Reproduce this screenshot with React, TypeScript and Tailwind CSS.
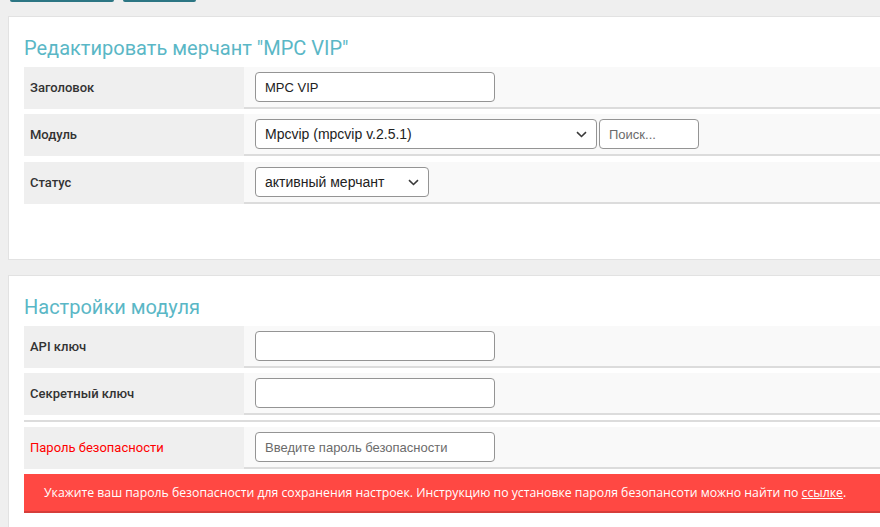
import React from "react";

const label = "w-[220px] shrink-0 bg-[#efefef] h-[42px] flex items-center pl-[6px] text-[13px] font-medium text-[#333]";
const cell = "flex-1 bg-[#f9f9f9] h-[42px] border-b-2 border-[#dcdcdc] flex items-center pl-[11px] gap-[2px]";
const input =
  "h-[30px] w-[240px] rounded-[4px] border border-[#949494] bg-white px-[9px] text-[13px] text-[#222] outline-none placeholder:text-[#6b6b6b] font-['Liberation_Sans',Arial,sans-serif]";

function Chevron() {
  return (
    <svg width="11" height="7" viewBox="0 0 11 7" className="shrink-0">
      <path d="M1 1.2 L5.5 5.5 L10 1.2" fill="none" stroke="#3a3a3a" strokeWidth="1.6" />
    </svg>
  );
}

function Select({ value, width }: { value: string; width: string }) {
  return (
    <div
      className={`h-[30px] ${width} rounded-[4px] border border-[#949494] bg-white pl-[9px] pr-[9px] flex items-center justify-between text-[14px] text-[#222] font-['Liberation_Sans',Arial,sans-serif]`}
    >
      <span>{value}</span>
      <Chevron />
    </div>
  );
}

function Row({ title, children, red }: { title: string; children: React.ReactNode; red?: boolean }) {
  return (
    <div className="flex">
      <div className={red ? label + " !font-normal !text-[#ff0000]" : label}>{title}</div>
      <div className={cell}>{children}</div>
    </div>
  );
}

export default function App() {
  return (
    <div className="w-[880px] h-[527px] overflow-hidden bg-[#efefef] font-['Roboto',sans-serif]">
      <div className="flex h-[2px]">
        <div className="ml-[10px] w-[104px] bg-[#2c7684] rounded-b-[2px]" />
        <div className="ml-[9px] w-[73px] bg-[#2c7684] rounded-b-[2px]" />
      </div>

      <div className="mt-[14px] ml-[8px] mr-[-30px] bg-white border border-[#e2e2e2] pl-[15px] pt-[20px] pb-[55px]">
        <h2 className="text-[20px] leading-[22px] text-[#5ab7c6] mb-[8px]">Редактировать мерчант "MPC VIP"</h2>
        <div className="flex flex-col">
          <Row title="Заголовок">
            <input className={input} readOnly value="MPC VIP" />
          </Row>
          <div className="mt-[5px]">
            <Row title="Модуль">
              <Select value="Mpcvip (mpcvip v.2.5.1)" width="w-[342px]" />
              <input className={input + " !w-[100px]"} readOnly placeholder="Поиск..." />
            </Row>
          </div>
          <div className="mt-[6px]">
            <Row title="Статус">
              <Select value="активный мерчант" width="w-[174px]" />
            </Row>
          </div>
        </div>
      </div>

      <div className="mt-[15px] ml-[8px] mr-[-30px] bg-white border border-[#e2e2e2] pl-[15px] pt-[20px] pb-[20px]">
        <h2 className="text-[20px] leading-[22px] text-[#5ab7c6] mb-[8px]">Настройки модуля</h2>
        <div className="flex flex-col gap-[5px]">
          <Row title="API ключ">
            <input className={input} readOnly />
          </Row>
          <Row title="Секретный ключ">
            <input className={input} readOnly />
          </Row>
          <div className="h-[2px] bg-[#dcdcdc]" />
          <Row title="Пароль безопасности" red>
            <input className={input} readOnly placeholder="Введите пароль безопасности" />
          </Row>
          <div className="bg-[#ff4843] border-b-2 border-[#d63e3a] h-[39px] flex items-center pl-[20px] pt-[2px] text-[12.25px] text-white font-['Open_Sans',sans-serif]">
            <span>
              Укажите ваш пароль безопасности для сохранения настроек. Инструкцию по установке пароля безопансоти можно
              найти по{" "}
              <a href="#" className="underline">
                ссылке
              </a>
              .
            </span>
          </div>
        </div>
      </div>
    </div>
  );
}
